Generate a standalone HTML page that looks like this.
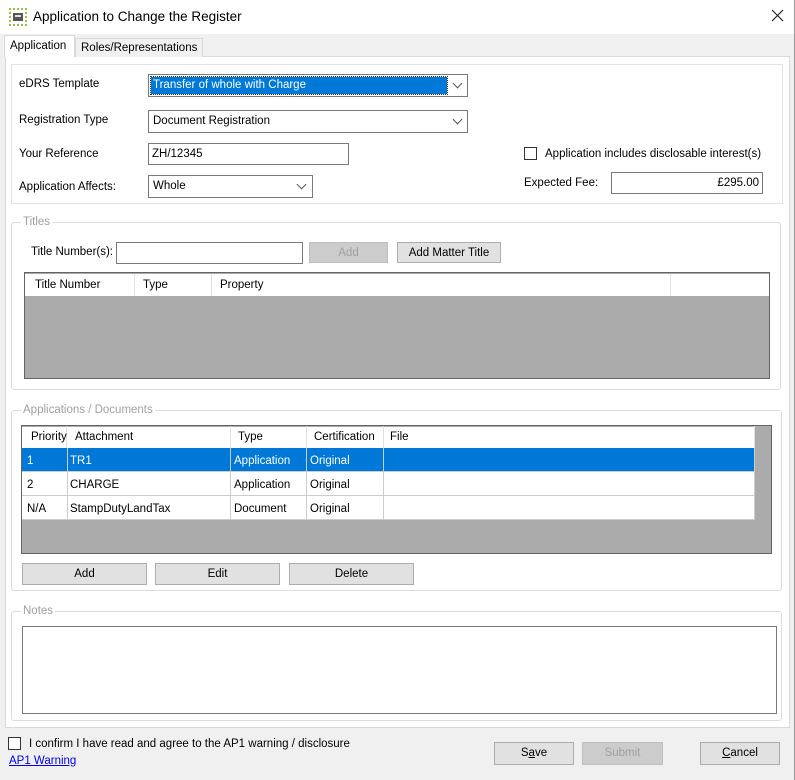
<!DOCTYPE html>
<html><head><meta charset="utf-8"><style>
*{box-sizing:border-box;margin:0;padding:0}
body{width:795px;height:780px;overflow:hidden;background:#f0f0f0;font-family:"Liberation Sans",sans-serif;font-size:11.5px;color:#000;position:relative}
.a{position:absolute;white-space:nowrap}
.lbl{position:absolute;white-space:nowrap;line-height:14px}
.box{position:absolute;background:#fff;border:1px solid #7a7a7a}
.grp{position:absolute;border:1px solid #dcdcdc;border-radius:3px}
.glbl{position:absolute;background:#fff;color:#a0a0a0;padding:0 2px;line-height:14px}
.btn{position:absolute;background:#e1e1e1;border:1px solid #adadad;text-align:center;line-height:20px}
.dis{background:#cccccc;border-color:#bfbfbf;color:#a0a0a0}
.arr{position:absolute;width:7px;height:7px;border-right:1px solid #555;border-bottom:1px solid #555;transform:rotate(45deg)}
.cell{position:absolute;line-height:22px;padding-left:4px;border-right:1px solid #e0e0e0}
</style></head><body>
<div class="a" style="left:0;top:0;width:795px;height:34px;background:#fff"></div>
<svg class="a" style="left:9px;top:8px" width="18" height="18" viewBox="0 0 18 18">
<g fill="#8dc63f"><rect x="0" y="0" width="2" height="2"/><rect x="4" y="0" width="2" height="2"/><rect x="8" y="0" width="2" height="2"/><rect x="12" y="0" width="2" height="2"/><rect x="16" y="0" width="2" height="2"/>
<rect x="0" y="16" width="2" height="2"/><rect x="4" y="16" width="2" height="2"/><rect x="8" y="16" width="2" height="2"/><rect x="12" y="16" width="2" height="2"/><rect x="16" y="16" width="2" height="2"/>
<rect x="0" y="4" width="2" height="2"/><rect x="0" y="8" width="2" height="2"/><rect x="0" y="12" width="2" height="2"/><rect x="16" y="4" width="2" height="2"/><rect x="16" y="8" width="2" height="2"/><rect x="16" y="12" width="2" height="2"/></g>
<rect x="4" y="5" width="10" height="8" fill="#555"/><rect x="6" y="7" width="6" height="2" fill="#ddd"/></svg>
<div class="a" style="left:33px;top:9px;font-size:13.5px;color:#000">Application to Change the Register</div>
<svg class="a" style="left:771px;top:9px" width="13" height="13"><path d="M1 1L12 12M12 1L1 12" stroke="#222" stroke-width="1.2"/></svg>
<div class="a" style="left:794px;top:0;width:1px;height:780px;background:#9a9a9a"></div>
<div class="a" style="left:5px;top:56px;width:785px;height:672px;background:#fff;border:1px solid #d9d9d9"></div>
<div class="a" style="left:75px;top:38px;width:128px;height:19px;background:#f0f0f0;border:1px solid #d9d9d9;border-bottom:none;padding-left:5px;line-height:18px">Roles/Representations</div>
<div class="a" style="left:4px;top:35px;width:71px;height:22px;background:#fff;border:1px solid #d9d9d9;border-bottom:none;padding-left:5px;line-height:20px">Application</div>
<div class="a" style="left:11px;top:64px;width:772px;height:140px;border:1px solid #e3e3e3"></div>
<div class="lbl" style="left:19px;top:77px">eDRS Template</div>
<div class="lbl" style="left:19px;top:113px">Registration Type</div>
<div class="lbl" style="left:19px;top:147px">Your Reference</div>
<div class="lbl" style="left:19px;top:180px">Application Affects:</div>
<div class="box" style="left:148px;top:74px;width:320px;height:23px"></div>
<div class="a" style="left:151px;top:77px;width:296px;height:17px;background:#0078d7;color:#fff;line-height:16px;padding-left:2px;outline:1px dotted #333">Transfer of whole with Charge</div>
<div class="arr" style="left:454px;top:80px"></div>
<div class="box" style="left:148px;top:110px;width:320px;height:23px;padding-left:4px;line-height:20px">Document Registration</div>
<div class="arr" style="left:454px;top:116px"></div>
<div class="box" style="left:148px;top:143px;width:201px;height:22px;padding-left:3px;line-height:20px">ZH/12345</div>
<div class="box" style="left:148px;top:175px;width:165px;height:23px;padding-left:4px;line-height:20px">Whole</div>
<div class="arr" style="left:298px;top:181px"></div>
<div class="a" style="left:524px;top:147px;width:13px;height:13px;border:1px solid #333;background:#fff"></div>
<div class="lbl" style="left:545px;top:147px">Application includes disclosable interest(s)</div>
<div class="lbl" style="left:524px;top:176px">Expected Fee:</div>
<div class="box" style="left:611px;top:172px;width:152px;height:22px;text-align:right;padding-right:3px;line-height:20px">£295.00</div>
<div class="grp" style="left:11px;top:222px;width:770px;height:168px"></div>
<div class="glbl" style="left:21px;top:215px">Titles</div>
<div class="lbl" style="left:31px;top:245px">Title Number(s):</div>
<div class="box" style="left:116px;top:242px;width:187px;height:22px"></div>
<div class="btn dis" style="left:309px;top:242px;width:79px;height:21px">Add</div>
<div class="btn" style="left:397px;top:242px;width:104px;height:21px">Add Matter Title</div>
<div class="a" style="left:24px;top:272px;width:746px;height:107px;background:#ababab;border:1px solid #646464"></div>
<div class="a" style="left:25px;top:274px;width:744px;height:22px;background:#fff"></div>
<div class="cell" style="left:25px;top:274px;width:110px;padding-left:10px">Title Number</div>
<div class="cell" style="left:135px;top:274px;width:77px;padding-left:8px">Type</div>
<div class="cell" style="left:212px;top:274px;width:459px;padding-left:8px">Property</div>
<div class="grp" style="left:11px;top:410px;width:771px;height:181px"></div>
<div class="glbl" style="left:21px;top:403px">Applications / Documents</div>
<div class="a" style="left:21px;top:425px;width:751px;height:129px;background:#ababab;border:1px solid #646464"></div>
<div class="a" style="left:22px;top:427px;width:733px;height:92px;background:#fff"></div>
<div class="cell" style="left:22px;top:426px;width:45px;padding-left:9px">Priority</div>
<div class="cell" style="left:67px;top:426px;width:164px;padding-left:8px">Attachment</div>
<div class="cell" style="left:231px;top:426px;width:76px;padding-left:7px">Type</div>
<div class="cell" style="left:307px;top:426px;width:77px;padding-left:7px">Certification</div>
<div class="cell" style="left:384px;top:426px;width:371px;padding-left:6px">File</div>
<div class="a" style="left:22px;top:448px;width:733px;height:23px;background:#0078d7"></div>
<div class="a" style="left:22px;top:471px;width:733px;height:1px;background:#ccc"></div>
<div class="a" style="left:22px;top:495px;width:733px;height:1px;background:#ccc"></div>
<div class="a" style="left:22px;top:519px;width:733px;height:1px;background:#ccc"></div>
<div class="a" style="left:67px;top:448px;width:1px;height:72px;background:#ccc"></div>
<div class="a" style="left:230px;top:448px;width:1px;height:72px;background:#ccc"></div>
<div class="a" style="left:306px;top:448px;width:1px;height:72px;background:#ccc"></div>
<div class="a" style="left:383px;top:448px;width:1px;height:72px;background:#ccc"></div>
<div class="a" style="left:754px;top:448px;width:1px;height:72px;background:#ccc"></div>
<div class="lbl" style="left:27px;top:454px;color:#fff">1</div>
<div class="lbl" style="left:70px;top:454px;color:#fff">TR1</div>
<div class="lbl" style="left:234px;top:454px;color:#fff">Application</div>
<div class="lbl" style="left:310px;top:454px;color:#fff">Original</div>
<div class="lbl" style="left:27px;top:478px">2</div>
<div class="lbl" style="left:70px;top:478px">CHARGE</div>
<div class="lbl" style="left:234px;top:478px">Application</div>
<div class="lbl" style="left:310px;top:478px">Original</div>
<div class="lbl" style="left:27px;top:502px">N/A</div>
<div class="lbl" style="left:70px;top:502px">StampDutyLandTax</div>
<div class="lbl" style="left:234px;top:502px">Document</div>
<div class="lbl" style="left:310px;top:502px">Original</div>
<div class="btn" style="left:22px;top:563px;width:125px;height:22px">Add</div>
<div class="btn" style="left:155px;top:563px;width:125px;height:22px">Edit</div>
<div class="btn" style="left:289px;top:563px;width:125px;height:22px">Delete</div>
<div class="grp" style="left:11px;top:611px;width:771px;height:110px"></div>
<div class="glbl" style="left:21px;top:604px">Notes</div>
<div class="box" style="left:22px;top:626px;width:755px;height:88px"></div>
<div class="a" style="left:8px;top:737px;width:13px;height:13px;border:1px solid #333;background:#fff"></div>
<div class="lbl" style="left:29px;top:737px">I confirm I have read and agree to the AP1 warning / disclosure</div>
<div class="lbl" style="left:9px;top:754px;color:#0000ee;text-decoration:underline">AP1 Warning</div>
<div class="btn" style="left:494px;top:742px;width:80px;height:23px">S<u>a</u>ve</div>
<div class="btn dis" style="left:582px;top:742px;width:81px;height:23px">Submit</div>
<div class="btn" style="left:700px;top:742px;width:80px;height:23px"><u>C</u>ancel</div>
</body></html>
